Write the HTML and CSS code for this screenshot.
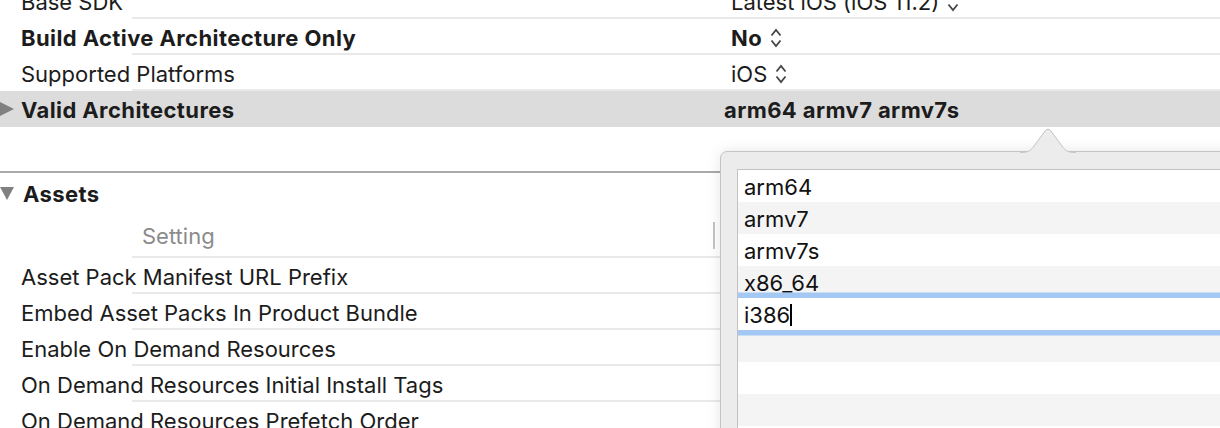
FILE: index.html
```html
<!DOCTYPE html>
<html>
<head>
<meta charset="utf-8">
<link rel="stylesheet" href="styles.css">
</head>
<body>
<div class="page">
  <div class="group">
    <div class="row"><div class="name">Base SDK</div><div class="value">Latest iOS (iOS 11.2)<svg class="chev" viewBox="0 0 12 20"><path d="M1.5 7.5 L6 2 L10.5 7.5 M1.5 12.5 L6 18 L10.5 12.5"/></svg></div></div>
    <div class="row bold"><div class="name">Build Active Architecture Only</div><div class="value">No<svg class="chev" viewBox="0 0 12 20"><path d="M1.5 7.5 L6 2 L10.5 7.5 M1.5 12.5 L6 18 L10.5 12.5"/></svg></div></div>
    <div class="row"><div class="name">Supported Platforms</div><div class="value">iOS<svg class="chev" viewBox="0 0 12 20"><path d="M1.5 7.5 L6 2 L10.5 7.5 M1.5 12.5 L6 18 L10.5 12.5"/></svg></div></div>
    <div class="row bold selected"><div class="name"><span class="tri-right"></span>Valid Architectures</div><div class="value shifted">arm64 armv7 armv7s</div></div>
  </div>

  <div class="section">
    <div class="section-head"><span class="tri-down"></span>Assets</div>
    <div class="row header"><div class="name">Setting</div><div class="value"><span class="divider"></span></div></div>
    <div class="row"><div class="name">Asset Pack Manifest URL Prefix</div><div class="value"></div></div>
    <div class="row"><div class="name">Embed Asset Packs In Product Bundle</div><div class="value"></div></div>
    <div class="row"><div class="name">Enable On Demand Resources</div><div class="value"></div></div>
    <div class="row"><div class="name">On Demand Resources Initial Install Tags</div><div class="value"></div></div>
    <div class="row"><div class="name">On Demand Resources Prefetch Order</div><div class="value"></div></div>
  </div>

  <div class="popover">
    <svg class="arrow" viewBox="0 0 56 26"><path class="arrow-fill" d="M0 25.5 C9 25.5 11 23 14 19 L25 4 Q28 0.3 31 4 L42 19 C45 23 47 25.5 56 25.5 L56 27 L0 27 Z"/><path class="arrow-line" d="M0 25.5 C9 25.5 11 23 14 19 L25 4 Q28 0.3 31 4 L42 19 C45 23 47 25.5 56 25.5"/></svg>
    <div class="list">
      <div class="item">arm64</div>
      <div class="item alt">armv7</div>
      <div class="item">armv7s</div>
      <div class="item alt">x86_64</div>
      <div class="item editing"><span>i386</span><span class="caret"></span></div>
      <div class="item alt"></div>
      <div class="item"></div>
      <div class="item alt"></div>
    </div>
  </div>
</div>
</body>
</html>
```
FILE: styles.css
```css
html, body {
  margin: 0;
  padding: 0;
  background: #ffffff;
}
body {
  width: 1220px;
  height: 428px;
  overflow: hidden;
  font-family: Inter, "Liberation Sans", sans-serif;
  font-size: 22px;
  color: #1c1c1c;
}
.page {
  position: relative;
  width: 1220px;
  height: 428px;
  overflow: hidden;
}
.group {
  margin-top: -17px;
}
.row {
  height: 36px;
  display: grid;
  grid-template-columns: 731px 1fr;
  align-items: center;
  padding-top: 2px;
  box-sizing: border-box;
  background: linear-gradient(#e9e9e9, #e9e9e9) no-repeat 132px 100% / calc(100% - 132px) 2px;
}
.name {
  padding-left: 21px;
  display: flex;
  align-items: center;
  white-space: nowrap;
  position: relative;
}
.value {
  display: flex;
  align-items: center;
  white-space: nowrap;
}
.bold {
  font-weight: 700;
  letter-spacing: 0.4px;
}
.chev {
  flex: none;
  width: 12px;
  height: 20px;
  margin-left: 8px;
  fill: none;
  stroke: #454545;
  stroke-width: 1.8;
}
.selected {
  background: #dcdcdc;
}
.shifted {
  margin-left: -7px;
}
.tri-right {
  position: absolute;
  left: 0;
  top: 50%;
  margin-top: -8px;
  width: 0;
  height: 0;
  border-top: 7px solid transparent;
  border-bottom: 7px solid transparent;
  border-left: 14px solid #808080;
}
.section {
  margin-top: 44px;
  border-top: 2px solid #a9a9a9;
}
.section-head {
  height: 49px;
  display: flex;
  align-items: center;
  padding-left: 23px;
  font-weight: 700;
  letter-spacing: 0.4px;
  position: relative;
  padding-bottom: 7px;
  box-sizing: border-box;
}
.tri-down {
  position: absolute;
  left: 0;
  top: 14px;
  width: 0;
  height: 0;
  border-left: 7px solid transparent;
  border-right: 7px solid transparent;
  border-top: 13px solid #808080;
}
.row.header {
  padding-top: 0;
  padding-bottom: 14px;
}
.header .name {
  padding-left: 142px;
  color: #8b8b8b;
}
.divider {
  display: block;
  width: 2px;
  height: 27px;
  margin-left: -18px;
  background: #c4c4c4;
}
.popover {
  position: absolute;
  left: 720px;
  top: 151px;
  width: 540px;
  height: 320px;
  background: #ececec;
  border: 1px solid #c4c4c4;
  border-radius: 7px;
  box-shadow: 0 0 14px rgba(0, 0, 0, 0.10);
  padding: 17px 0 0 16px;
  box-sizing: border-box;
}
.arrow {
  position: absolute;
  left: 299px;
  top: -25px;
  width: 56px;
  height: 26px;
  overflow: visible;
}
.arrow-fill {
  fill: #ececec;
}
.arrow-line {
  fill: none;
  stroke: #c4c4c4;
  stroke-width: 1;
}
.list {
  background: #ffffff;
  border-top: 1px solid #c2c2c2;
  border-left: 1px solid #c2c2c2;
  overflow: hidden;
  height: 300px;
}
.item {
  height: 32px;
  display: flex;
  align-items: center;
  padding-left: 6px;
  padding-top: 1px;
  box-sizing: border-box;
  background: #ffffff;
  color: #111111;
}
.item.alt {
  background: #f4f4f4;
}
.editing {
  position: relative;
  z-index: 1;
  box-shadow: 0 0 0 5.5px #a3c8f4;
}
.caret {
  display: inline-block;
  width: 2px;
  height: 22px;
  background: #000000;
}
```
